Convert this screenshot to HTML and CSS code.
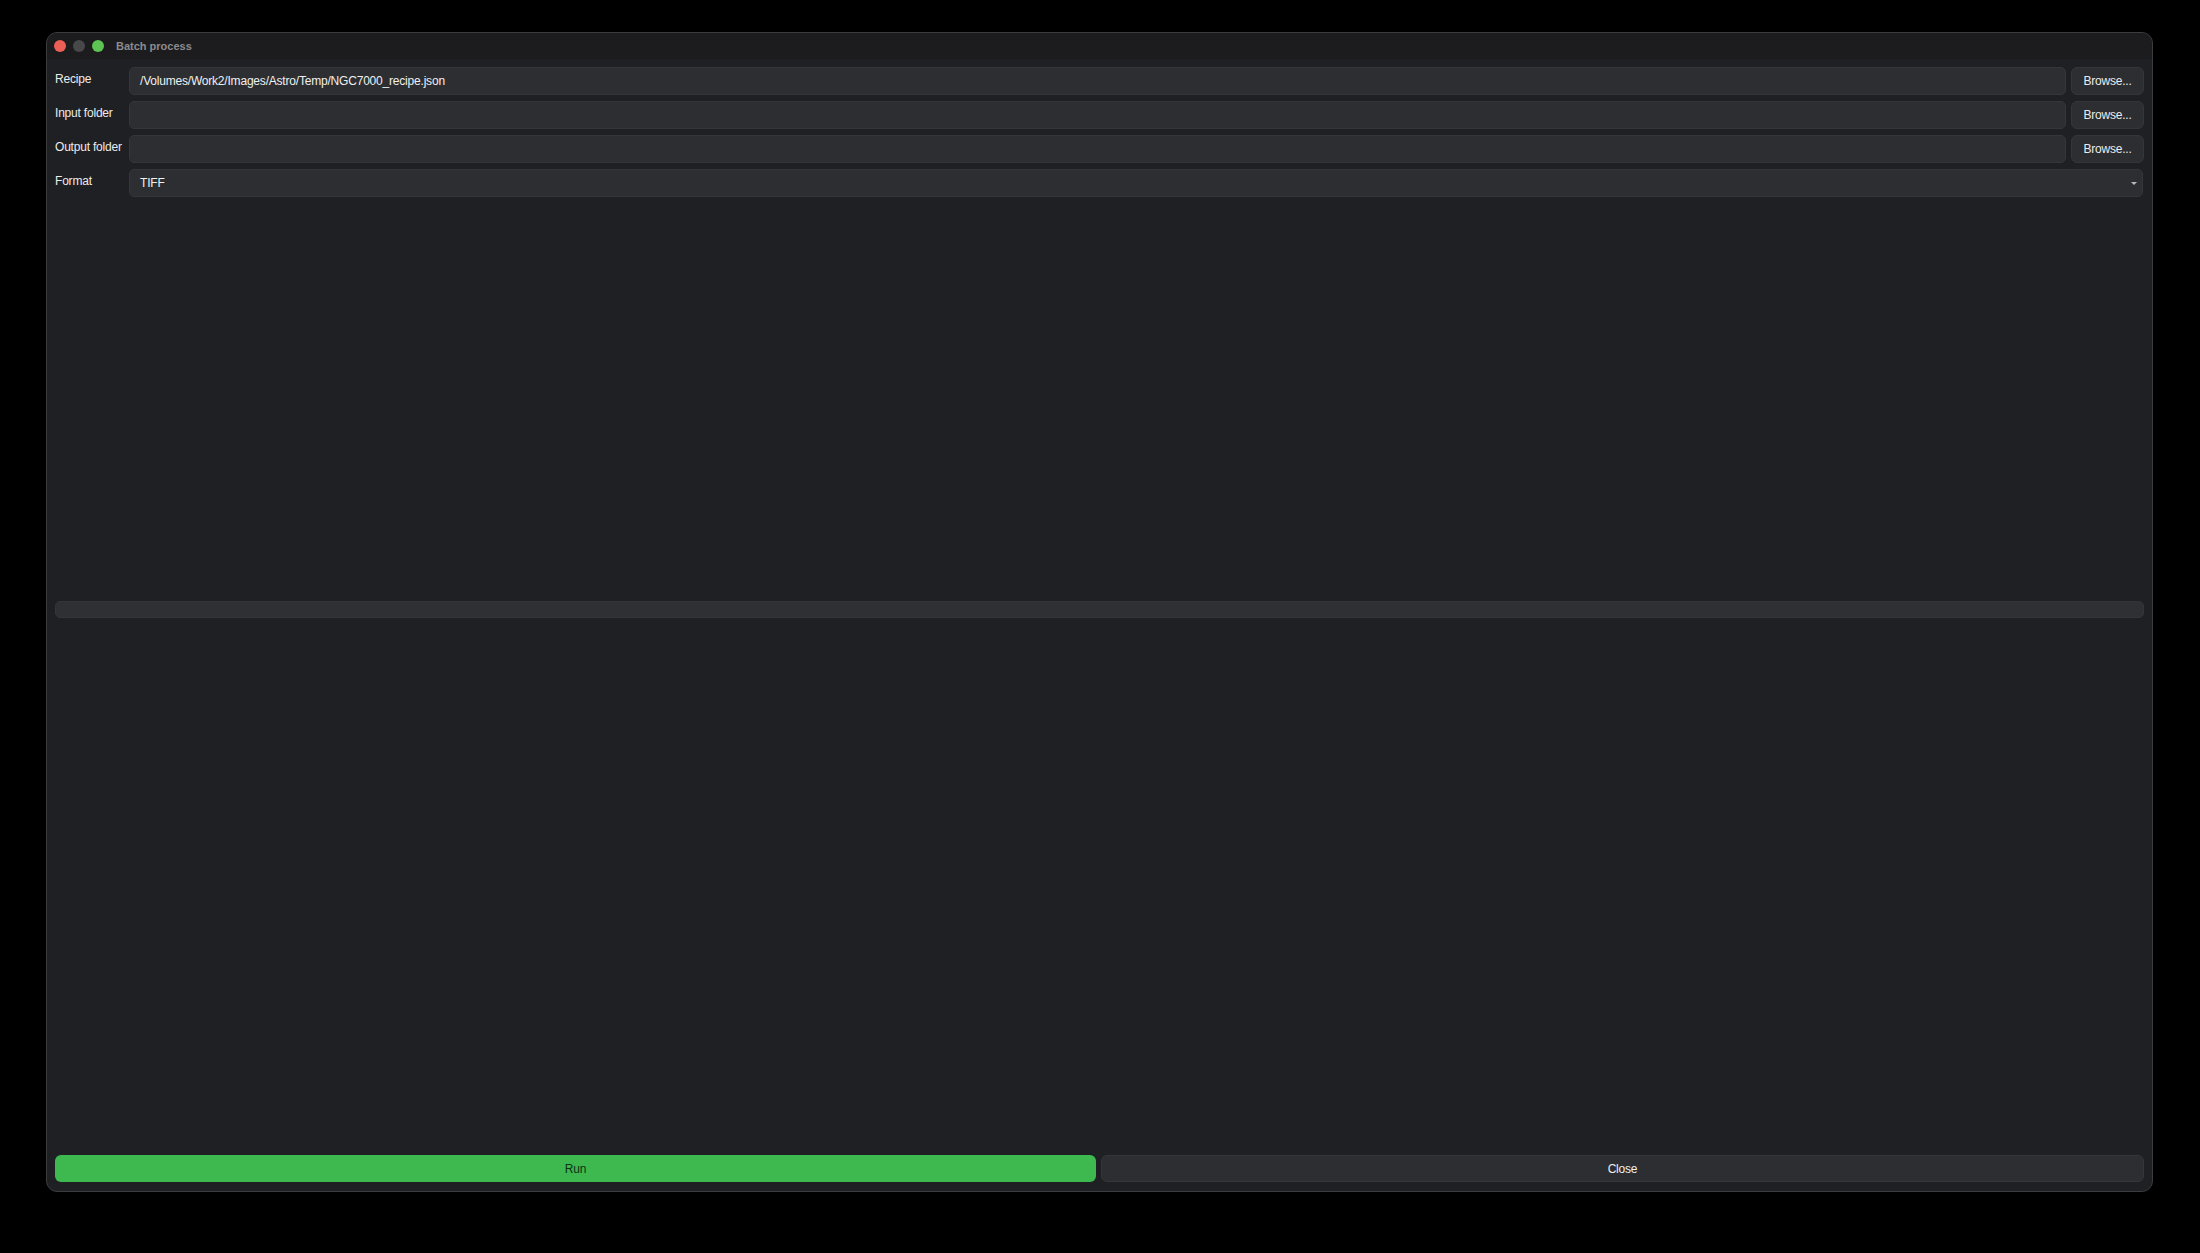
FILE: index.html
```html
<!DOCTYPE html>
<html lang="en">
<head>
    <meta charset="UTF-8">
    <title>Batch process</title>
    <link rel="stylesheet" href="styles.css">
</head>
<body>

<div class="window">
    <div class="titlebar">
        <span class="light red"></span>
        <span class="light grey"></span>
        <span class="light green"></span>
        <span class="title">Batch process</span>
    </div>

    <div class="content">
        <div class="form">
            <div class="row">
                <label>Recipe</label>
                <div class="field">/Volumes/Work2/Images/Astro/Temp/NGC7000_recipe.json</div>
                <button class="browse">Browse...</button>
            </div>
            <div class="row">
                <label>Input folder</label>
                <div class="field"></div>
                <button class="browse">Browse...</button>
            </div>
            <div class="row">
                <label>Output folder</label>
                <div class="field"></div>
                <button class="browse">Browse...</button>
            </div>
            <div class="row">
                <label>Format</label>
                <div class="field select">TIFF<span class="arrow"></span></div>
            </div>
        </div>

        <div class="upper-space"></div>
        <div class="progress"></div>
        <div class="lower-space"></div>

        <div class="actions">
            <button class="run-btn">Run</button>
            <button class="close-btn">Close</button>
        </div>
    </div>
</div>

</body>
</html>
```

FILE: styles.css
```css
/* Alap */
body {
    margin: 0;
    padding: 0;
    background-color: #000;
    font-family: "Liberation Sans", Arial, sans-serif;
    font-size: 12px;
    letter-spacing: -0.2px;
    color: #e8e8e8;
}

.window {
    margin: 32px 0 0 46px;
    width: 2105px;
    height: 1158px;
    background-color: #1f2023;
    border: 1px solid #3c3c3f;
    border-radius: 11px;
    display: flex;
    flex-direction: column;
    overflow: hidden;
}

.titlebar {
    height: 26px;
    display: flex;
    align-items: center;
    padding-left: 7px;
    background-color: #1c1c1e;
}

.light {
    width: 12px;
    height: 12px;
    border-radius: 50%;
    margin-right: 7px;
}

.red {
    background-color: #ec5f57;
}

.grey {
    background-color: #48484a;
}

.green {
    background-color: #5dc453;
}

.title {
    margin-left: 5px;
    font-size: 11px;
    font-weight: bold;
    letter-spacing: 0;
    color: #8b8b8e;
}

.content {
    flex: 1;
    display: flex;
    flex-direction: column;
    padding: 8px 8px 9px 8px;
}

.form {
    display: flex;
    flex-direction: column;
    gap: 6px;
}

.row {
    display: flex;
    align-items: center;
    gap: 5px;
    height: 28px;
}

.row label {
    width: 69px;
    margin-top: -4px;
    white-space: nowrap;
    color: #ececec;
}

.field {
    flex: 1;
    height: 26px;
    line-height: 26px;
    padding: 0 10px;
    background-color: #2c2e32;
    border: 1px solid #34363a;
    border-radius: 5px;
    color: #f0f0f0;
    position: relative;
}

.select {
    margin-right: 1px;
}

.arrow {
    position: absolute;
    right: 5px;
    top: 12px;
    border-left: 3px solid transparent;
    border-right: 3px solid transparent;
    border-top: 3px solid #b8b8b8;
}

button {
    font-family: "Liberation Sans", Arial, sans-serif;
    letter-spacing: -0.2px;
    border: none;
    cursor: pointer;
}

.browse {
    width: 73px;
    height: 28px;
    background-color: #2c2e32;
    border: 1px solid #34363a;
    border-radius: 6px;
    color: #ececec;
    font-size: 12px;
}

.upper-space {
    height: 404px;
}

.progress {
    height: 15px;
    background-color: #2e3034;
    border: 1px solid #33353a;
    border-radius: 5px;
}

.lower-space {
    flex: 1;
}

.actions {
    display: flex;
    gap: 5px;
}

.actions button {
    flex: 1;
    height: 27px;
    border-radius: 6px;
    font-size: 12px;
}

.run-btn {
    background-color: #3eb94f;
    color: #0c3314;
}

.close-btn {
    background-color: #2c2e32;
    border: 1px solid #34363a;
    color: #f0f0f0;
}
```
